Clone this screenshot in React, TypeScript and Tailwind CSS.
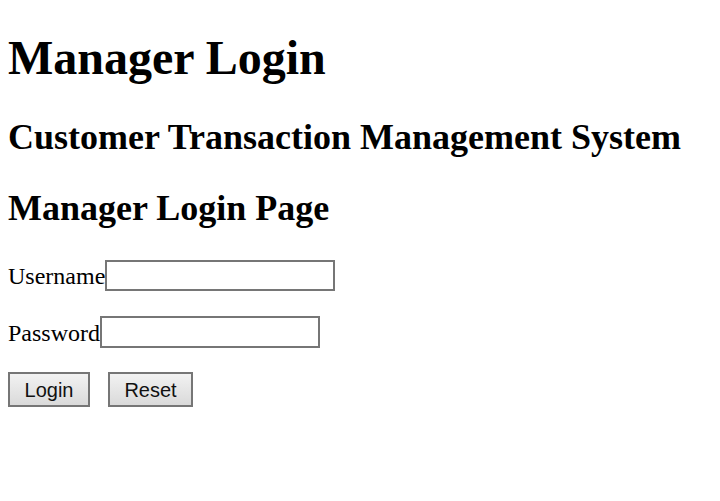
export default function App() {
  return (
    <div className="min-h-[501px] bg-white px-2 text-black" style={{ fontFamily: '"Liberation Serif", "Times New Roman", serif' }}>
      <h1 className="pt-[30px] text-[48px] font-bold leading-[55px]">Manager Login</h1>
      <h2 className="mt-[32px] text-[36px] font-bold leading-[41px]">Customer Transaction Management System</h2>
      <h2 className="mt-[30px] text-[36px] font-bold leading-[41px]">Manager Login Page</h2>

      <form className="mt-[31px] flex flex-col text-[24px] leading-[27px]">
        <div className="flex items-center">
          <label className="pt-[2px]">Username</label>
          <input type="text" className="h-[31px] w-[230px] border-2 border-[#767676] bg-white outline-none" />
        </div>
        <div className="mt-[25px] flex items-center">
          <label className="pt-[2px]">Password</label>
          <input type="password" className="h-[32px] w-[220px] border-2 border-[#767676] bg-white outline-none" />
        </div>
        <div className="mt-[24px] flex gap-[18px]" style={{ fontFamily: '"Liberation Sans", Arial, sans-serif' }}>
          <button type="button" className="h-[35px] w-[82px] border-2 border-[#767676] bg-gradient-to-b from-[#f2f2f2] to-[#dadada] text-[20px] leading-none text-[#111]">
            Login
          </button>
          <button type="reset" className="h-[35px] w-[85px] border-2 border-[#767676] bg-gradient-to-b from-[#f2f2f2] to-[#dadada] text-[20px] leading-none text-[#111]">
            Reset
          </button>
        </div>
      </form>
    </div>
  );
}
